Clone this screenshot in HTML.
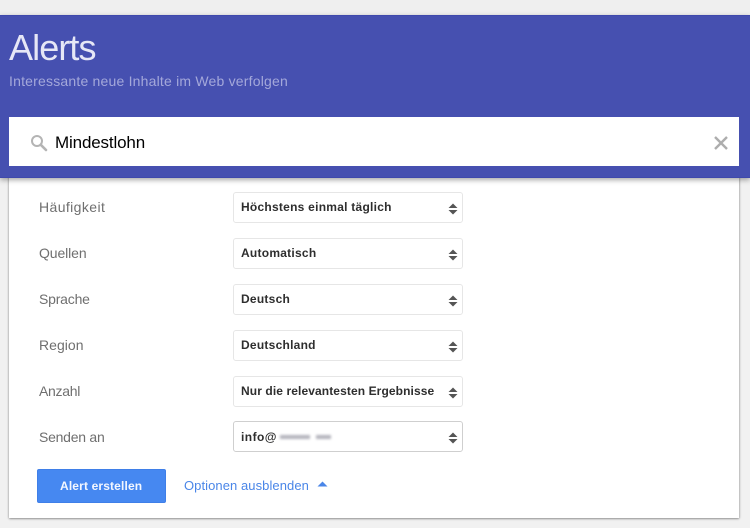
<!DOCTYPE html>
<html lang="de"><head><meta charset="utf-8"><title>Alerts</title>
<style>
html,body{margin:0;padding:0}
body{width:750px;height:528px;position:relative;overflow:hidden;background:#f1f1f1;font-family:"Liberation Sans",sans-serif}
div,span,a{position:absolute;white-space:nowrap}
.top{left:0;top:0;width:750px;height:15px;background:#efefef}
.card{left:9px;top:170px;width:730px;height:348px;background:#fff;box-shadow:0 1px 2px rgba(0,0,0,.35),1px 0 2px rgba(0,0,0,.12),-1px 0 2px rgba(0,0,0,.08)}
.hdr{left:0;top:15px;width:750px;height:163px;background:#4650b0;border-top:1px solid #3f49ac;border-bottom:1px solid #3f49ac;box-sizing:border-box;box-shadow:0 2px 5px rgba(0,0,0,.35)}
.t{left:9px;top:27px;font-size:36px;line-height:42px;color:#e6e7f6;letter-spacing:-.9px}
.s{left:9px;top:73px;font-size:14px;line-height:17px;color:#a4a8da;letter-spacing:.2px}
.q{left:9px;top:117px;width:730px;height:49px;background:#fff}
.qt{left:55px;top:133px;font-size:17px;line-height:19px;color:#000;letter-spacing:-.15px}
.l{left:39px;font-size:14px;line-height:17px;color:#6f6f6f}
.b{left:233px;width:230px;height:31px;box-sizing:border-box;background:#fff;border:1px solid #e6e6e6;border-radius:3px}
.v{left:241px;font-size:12px;line-height:15px;font-weight:bold;color:#2e2e2e;letter-spacing:.25px}
.btn{left:37px;top:469px;width:129px;height:34px;box-sizing:border-box;background:#4688f1;border:1px solid #3f7fe8;border-radius:2px}
.bt{left:60px;top:479px;font-size:12px;line-height:15px;font-weight:bold;color:#f3f7ff;letter-spacing:.15px}
.o{left:184px;top:478px;font-size:13px;line-height:16px;color:#4a86e8;letter-spacing:.07px}
svg{position:absolute;display:block}
.blur{left:276px;top:431px;width:58px;height:12px;filter:blur(1.3px)}
.blur span{height:4px;top:4px;background:#b4b4bd}
</style></head><body>
<div class="top"></div>
<div class="card"></div>
<div class="hdr"></div>
<div class="t">Alerts</div>
<div class="s">Interessante neue Inhalte im Web verfolgen</div>
<div class="q"></div>
<svg style="left:30px;top:134px" width="18" height="18" viewBox="0 0 18 18"><circle cx="7" cy="7" r="5" fill="none" stroke="#b4b4b4" stroke-width="2"/><path d="M10.8 10.8L16 16" stroke="#b4b4b4" stroke-width="2.6" stroke-linecap="round"/></svg>
<div class="qt">Mindestlohn</div>
<svg style="left:713px;top:135px" width="16" height="16" viewBox="0 0 16 16"><path d="M2 2L14 14M14 2L2 14" stroke="#adadad" stroke-width="2.4"/></svg>

<div class="l" style="top:199px;letter-spacing:.4px">Häufigkeit</div>
<div class="l" style="top:245px;letter-spacing:-.1px">Quellen</div>
<div class="l" style="top:291px;letter-spacing:-.2px">Sprache</div>
<div class="l" style="top:337px;letter-spacing:.03px">Region</div>
<div class="l" style="top:383px;letter-spacing:-.3px">Anzahl</div>
<div class="l" style="top:429px;letter-spacing:-.25px">Senden an</div>

<div class="b" style="top:192px"></div><div class="v" style="top:200px">Höchstens einmal täglich</div>
<div class="b" style="top:238px"></div><div class="v" style="top:246px">Automatisch</div>
<div class="b" style="top:284px"></div><div class="v" style="top:292px">Deutsch</div>
<div class="b" style="top:330px"></div><div class="v" style="top:338px">Deutschland</div>
<div class="b" style="top:376px"></div><div class="v" style="top:384px;letter-spacing:.1px">Nur die relevantesten Ergebnisse</div>
<div class="b" style="top:421px;border-color:#cfcfcf"></div><div class="v" style="top:430px;letter-spacing:.45px">info@</div>
<div class="blur"><span style="left:4px;width:30px"></span><span style="left:40px;width:15px"></span></div>

<svg style="left:448px;top:203px" width="10" height="12" viewBox="0 0 10 12"><path d="M5 0.5L9.5 5H.5ZM5 11.5L.5 7H9.5Z" fill="#555"/></svg>
<svg style="left:448px;top:249px" width="10" height="12" viewBox="0 0 10 12"><path d="M5 0.5L9.5 5H.5ZM5 11.5L.5 7H9.5Z" fill="#555"/></svg>
<svg style="left:448px;top:295px" width="10" height="12" viewBox="0 0 10 12"><path d="M5 0.5L9.5 5H.5ZM5 11.5L.5 7H9.5Z" fill="#555"/></svg>
<svg style="left:448px;top:341px" width="10" height="12" viewBox="0 0 10 12"><path d="M5 0.5L9.5 5H.5ZM5 11.5L.5 7H9.5Z" fill="#555"/></svg>
<svg style="left:448px;top:387px" width="10" height="12" viewBox="0 0 10 12"><path d="M5 0.5L9.5 5H.5ZM5 11.5L.5 7H9.5Z" fill="#555"/></svg>
<svg style="left:448px;top:432px" width="10" height="12" viewBox="0 0 10 12"><path d="M5 0.5L9.5 5H.5ZM5 11.5L.5 7H9.5Z" fill="#555"/></svg>

<div class="btn"></div><div class="bt">Alert erstellen</div>
<div class="o">Optionen ausblenden</div>
<svg style="left:317px;top:481px" width="11" height="7" viewBox="0 0 11 7"><path d="M5.5 .5L10.5 5.5H.5Z" fill="#4a86e8"/></svg>
</body></html>
